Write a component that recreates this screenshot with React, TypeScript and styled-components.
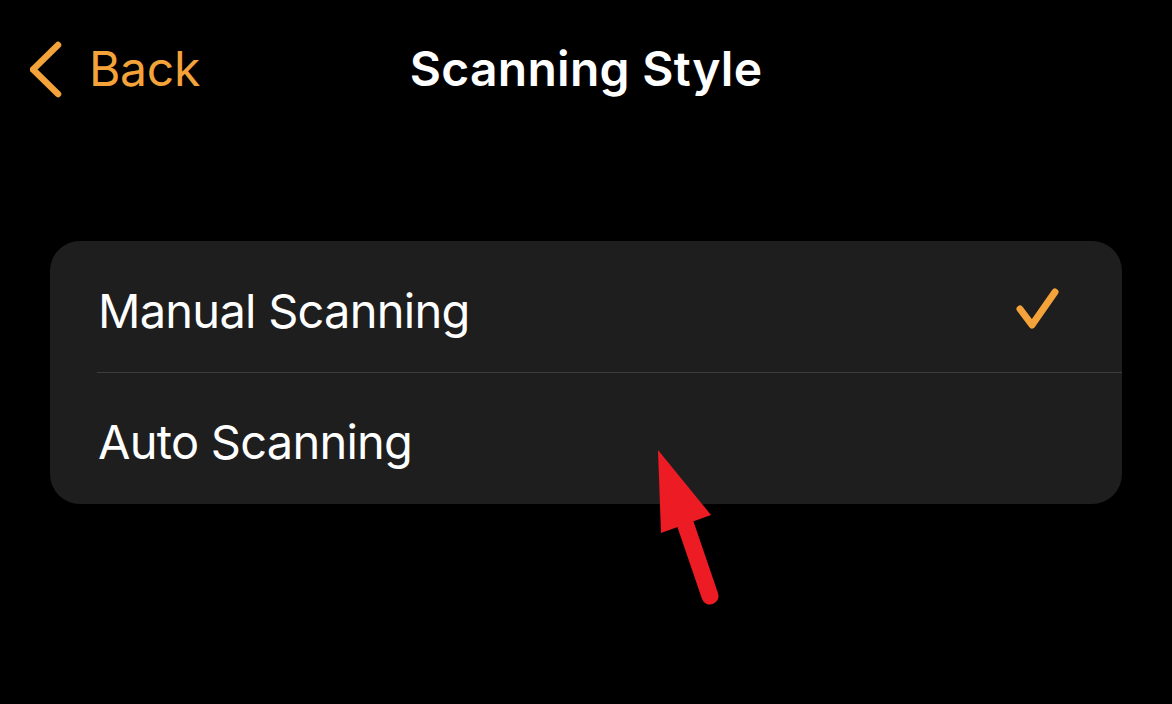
import React from "react";
import styled, { createGlobalStyle } from "styled-components";

const Global = createGlobalStyle`
  html, body { margin: 0; padding: 0; background: #000; }
  body { font-family: Inter, "Noto Sans", "Liberation Sans", sans-serif; -webkit-font-smoothing: antialiased; }
`;

const ORANGE = "#F3A33A";

const Page = styled.div`
  position: relative;
  width: 1172px;
  height: 704px;
  background: #000;
  overflow: hidden;
`;

const Header = styled.header`
  display: grid;
  grid-template-columns: 1fr auto 1fr;
  align-items: center;
  padding: 40px 30px 0 30px;
  height: 58px;
  box-sizing: content-box;
`;

const BackButton = styled.div`
  display: flex;
  align-items: center;
  gap: 27px;
  color: ${ORANGE};
  font-size: 48px;
  line-height: 58px;
  font-weight: 400;
  letter-spacing: -0.3px;
`;

const Title = styled.h1`
  margin: 0;
  color: #fff;
  font-size: 48px;
  line-height: 58px;
  font-weight: 600;
  letter-spacing: 0.3px;
`;

const Card = styled.div`
  margin: 143px 50px 0 50px;
  background: #1e1e1e;
  border-radius: 30px;
  overflow: hidden;
`;

const Row = styled.div<{ $divider?: boolean }>`
  position: relative;
  display: flex;
  align-items: center;
  justify-content: space-between;
  height: ${(p) => (p.$divider ? 132 : 131)}px;
  box-sizing: border-box;
  padding: 6px 60px 0 48px;
  &::after {
    content: "";
    display: ${(p) => (p.$divider ? "block" : "none")};
    position: absolute;
    left: 47px;
    right: 0;
    bottom: 0;
    height: 1px;
    background: #3d3d3f;
  }
`;

const Label = styled.span`
  color: #fff;
  font-size: 47px;
  line-height: 57px;
  font-weight: 400;
  letter-spacing: -0.75px;
`;

const Arrow = styled.svg`
  position: absolute;
  left: 640px;
  top: 440px;
`;

export default function App() {
  return (
    <Page>
      <Global />
      <Header>
        <BackButton>
          <svg width="32" height="58" viewBox="0 0 32 58">
            <polyline
              points="28,5 3,29.5 28,54"
              fill="none"
              stroke={ORANGE}
              strokeWidth="6.5"
              strokeLinecap="round"
              strokeLinejoin="round"
            />
          </svg>
          <span>Back</span>
        </BackButton>
        <Title>Scanning Style</Title>
        <div />
      </Header>
      <Card>
        <Row $divider>
          <Label>Manual Scanning</Label>
          <svg width="46" height="46" viewBox="0 0 46 46">
            <polyline
              points="4,22 16,38 39,5"
              fill="none"
              stroke={ORANGE}
              strokeWidth="7"
              strokeLinecap="round"
              strokeLinejoin="round"
            />
          </svg>
        </Row>
        <Row>
          <Label>Auto Scanning</Label>
        </Row>
      </Card>
      <Arrow width="100" height="180" viewBox="640 440 100 180">
        <polygon points="658,450 711,515 661,533" fill="#ED1C24" />
        <line x1="684" y1="520" x2="710" y2="596" stroke="#ED1C24" strokeWidth="17" strokeLinecap="round" />
      </Arrow>
    </Page>
  );
}
